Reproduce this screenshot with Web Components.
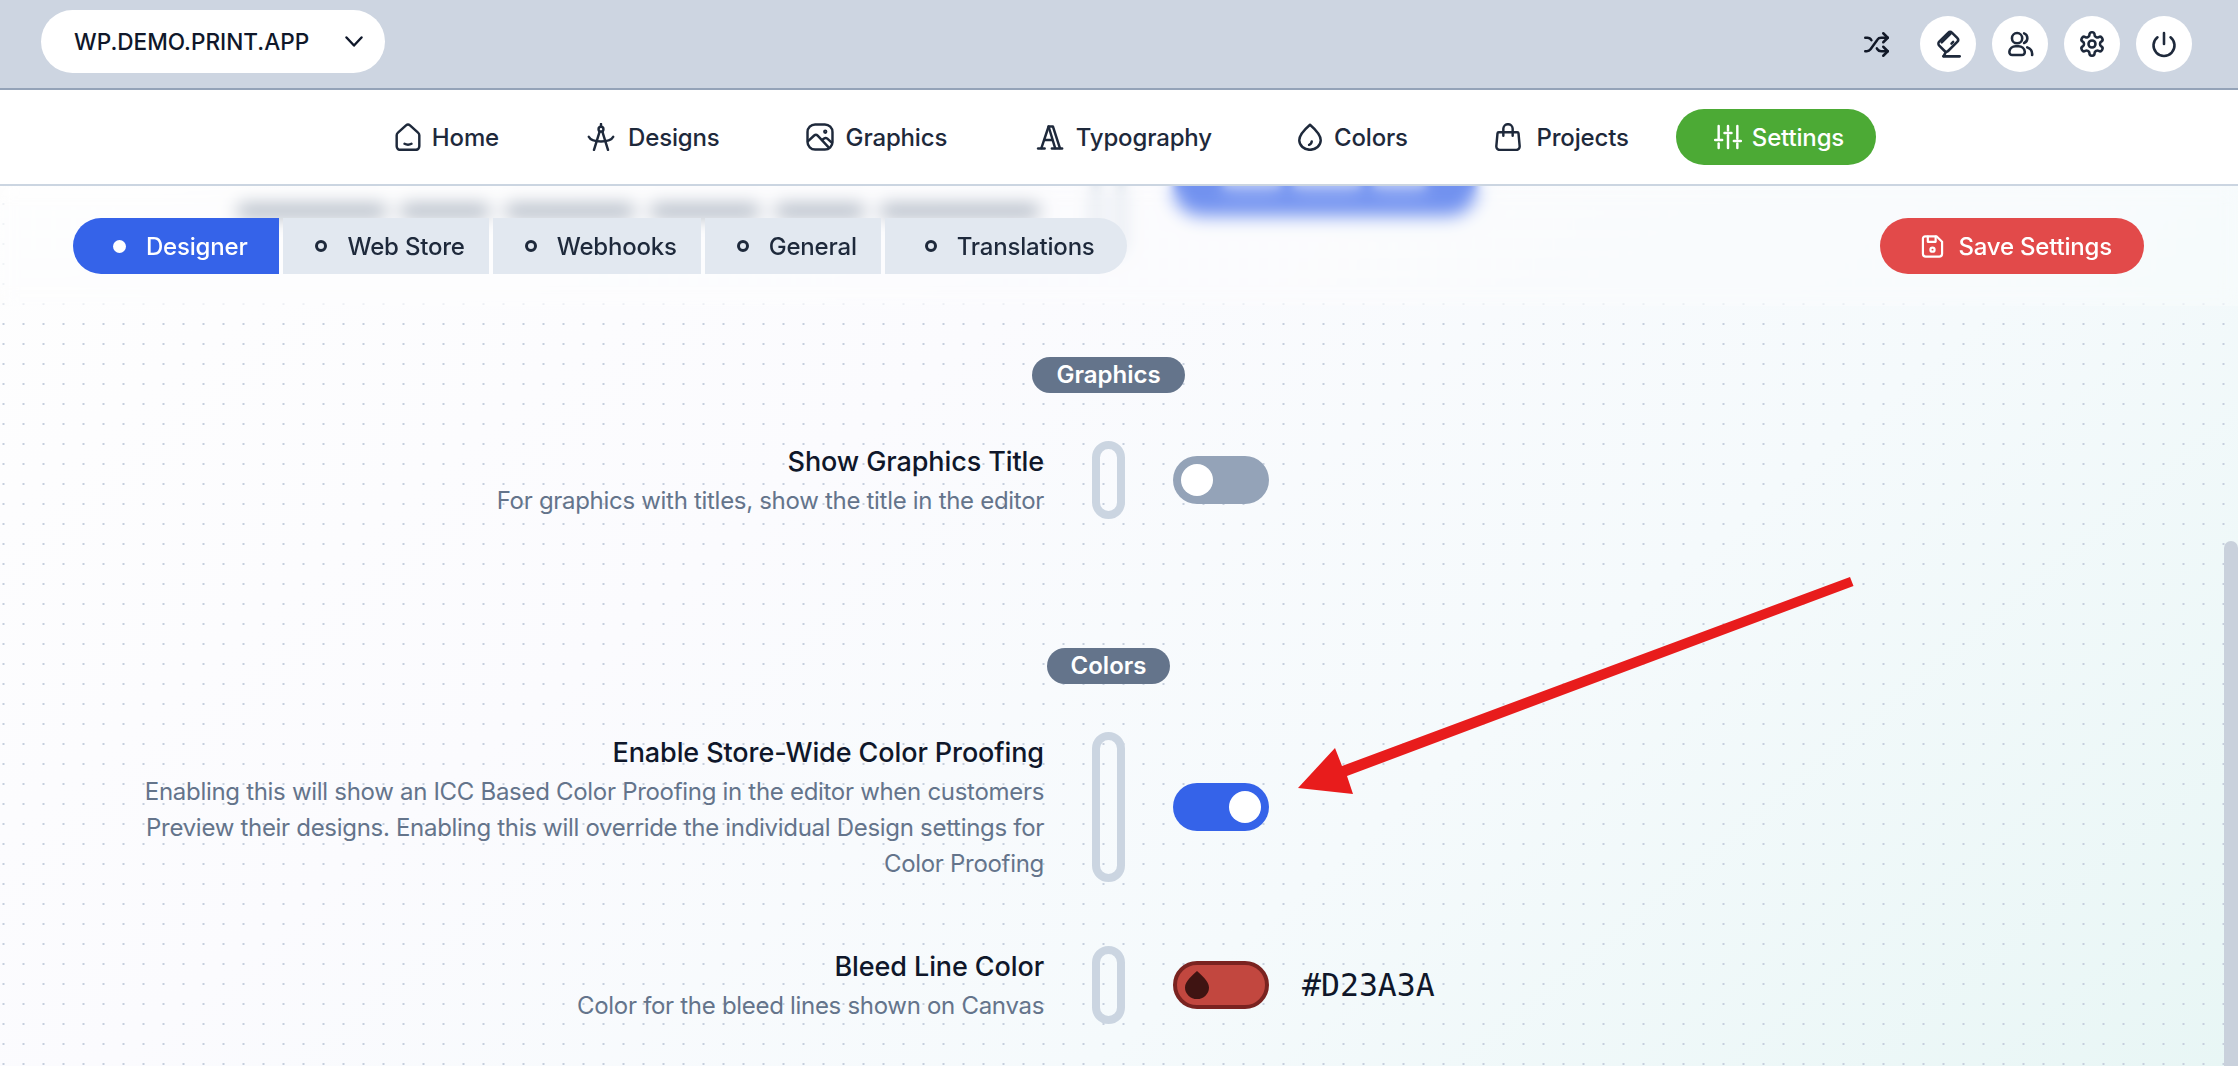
<!DOCTYPE html>
<html lang="en">
<head>
<meta charset="utf-8">
<title>Settings</title>
<style>
  html, body { margin: 0; padding: 0; height: 100%; overflow: hidden; }
  body { font-family: Inter, "Noto Sans", sans-serif; color: #1e293b; }
</style>
</head>
<body>
<settings-page>
  <top-bar slot="top">
    <site-picker>WP.DEMO.PRINT.APP</site-picker>
    <round-btn plain icon="shuffle"></round-btn>
    <round-btn icon="card"></round-btn>
    <round-btn icon="users"></round-btn>
    <round-btn icon="gear"></round-btn>
    <round-btn icon="power"></round-btn>
  </top-bar>
  <main-nav slot="top">
    <nav-link icon="home">Home</nav-link>
    <nav-link icon="compass" style="gap:13px">Designs</nav-link>
    <nav-link icon="image" style="gap:11.500px;margin-left:-1.500px">Graphics</nav-link>
    <nav-link icon="type" style="gap:11.500px;margin-left:1px">Typography</nav-link>
    <nav-link icon="drop" style="margin-left:-4px">Colors</nav-link>
    <nav-link icon="bag" style="gap:14px;margin-left:-1.500px">Projects</nav-link>
    <nav-link icon="sliders" active style="margin-left:-8.500px">Settings</nav-link>
  </main-nav>

  <setting-section label="Graphics">
    <setting-row heading="Show Graphics Title" note="For graphics with titles, show the title in the editor">
      <toggle-switch></toggle-switch>
    </setting-row>
  </setting-section>

  <setting-section label="Colors" class="colors">
    <setting-row heading="Enable Store-Wide Color Proofing" note="Enabling this will show an ICC Based Color Proofing in the editor when customers Preview their designs. Enabling this will override the individual Design settings for Color Proofing">
      <toggle-switch on></toggle-switch>
    </setting-row>
    <setting-row heading="Bleed Line Color" note="Color for the bleed lines shown on Canvas">
      <color-switch value="#D23A3A"></color-switch>
    </setting-row>
  </setting-section>
</settings-page>

<script>
// every icon used on the page, 24x24 stroke paths
const ICONS = {
  shuffle: '<path d="M2 18h1.4c1.3 0 2.5-.6 3.3-1.7l6.1-8.6c.7-1.1 2-1.7 3.3-1.7H22"/><path d="m18 2 4 4-4 4"/><path d="M2 6h1.9c1.5 0 2.9.9 3.6 2.2"/><path d="M22 18h-5.9c-1.3 0-2.6-.7-3.3-1.8l-.5-.8"/><path d="m18 14 4 4-4 4"/>',
  card: '<rect x="4.4" y="4.6" width="15.6" height="11" rx="2.4" transform="rotate(-45 12.2 10.1)"/><path d="m6.6 10.6 7.6-7.6"/><path d="m15 11.6 1.4-1.4"/><path d="M8 22.6h14"/><path d="m8.4 22.2 1.6-3"/>',
  users: '<circle cx="9.5" cy="7" r="4.4"/><path d="M5.5 21.5h8a2.6 2.6 0 0 0 2.6-3 5.4 5.4 0 0 0-5.3-4.5H8.2a5.4 5.4 0 0 0-5.3 4.5 2.6 2.6 0 0 0 2.6 3z"/><path d="M15.5 2.9a4.4 4.4 0 0 1 0 8.2"/><path d="M22.4 21.5c.3-3-1.4-5.6-4.2-6.6"/>',
  gear: '<path d="M12.22 2h-.44a2 2 0 0 0-2 2v.18a2 2 0 0 1-1 1.73l-.43.25a2 2 0 0 1-2 0l-.15-.08a2 2 0 0 0-2.73.73l-.22.38a2 2 0 0 0 .73 2.73l.15.1a2 2 0 0 1 1 1.72v.51a2 2 0 0 1-1 1.74l-.15.09a2 2 0 0 0-.73 2.73l.22.38a2 2 0 0 0 2.73.73l.15-.08a2 2 0 0 1 2 0l.43.25a2 2 0 0 1 1 1.73V20a2 2 0 0 0 2 2h.44a2 2 0 0 0 2-2v-.18a2 2 0 0 1 1-1.73l.43-.25a2 2 0 0 1 2 0l.15.08a2 2 0 0 0 2.73-.73l.22-.39a2 2 0 0 0-.73-2.73l-.15-.08a2 2 0 0 1-1-1.74v-.5a2 2 0 0 1 1-1.74l.15-.09a2 2 0 0 0 .73-2.73l-.22-.38a2 2 0 0 0-2.73-.73l-.15.08a2 2 0 0 1-2 0l-.43-.25a2 2 0 0 1-1-1.73V4a2 2 0 0 0-2-2z"/><circle cx="12" cy="12" r="3"/>',
  power: '<path d="M12 2.5v9.5"/><path d="M6.4 6.2a9 9 0 1 0 11.2 0"/>',
  home: '<path d="M2.3 10.6c0-.9.4-1.7 1.1-2.3L10.300 2a2.600 2.600 0 0 1 3.400 0l6.900 6.300c.7.6 1.100 1.400 1.100 2.300v9.400a3 3 0 0 1-3 3H5.300a3 3 0 0 1-3-3z"/><path d="M9 17.800c1.800 1 4.200 1 6 0"/>',
  compass: '<path d="M12 .8v2.400"/><circle cx="12" cy="5.300" r="2.100"/><path d="M10.900 7.200 6 23"/><path d="M13.100 7.200 18 23"/><path d="M1.500 11.800c2.700 5.400 18.300 5.400 21 0"/>',
  image: '<rect x="1.300" y="1.300" width="21.400" height="21.400" rx="6.500"/><path d="M1.800 15.500 7 10.700c.9-.8 2.100-.8 3 .1l9.800 10.500"/><path d="m14 14.300 1.500-1.100c.9-.6 2-.5 2.800.2l4 3.600"/><circle cx="16.500" cy="7.500" r=".8"/>',
  type: '<path d="M4.600 21.500 10.800 3h3.700l6 18.500"/><path d="M10.800 3 16.400 21.500"/><path d="M7 14.500h6.700"/><path d="M1.800 21.800h5.600"/><path d="M13.600 21.800h8.800"/>',
  drop: '<path d="M12 1.500C7.600 5.300 2.800 10.300 2.800 14.800a9.200 8.200 0 0 0 18.400 0C21.200 10.300 16.400 5.300 12 1.500z"/><path d="M13.500 15.800c-.1 1.400-1 2.500-2.300 2.900"/>',
  bag: '<path d="M4 8h16a1 1 0 0 1 1 .9l1 11a3 3 0 0 1-3 3.200H5a3 3 0 0 1-3-3.200l1-11a1 1 0 0 1 1-.9z"/><path d="M8 11V5a4 4 0 0 1 8 0v6"/>',
  sliders: '<path d="M4 2.500v11"/><path d="M4 17.500v4"/><path d="M1 14.500h6"/><path d="M12 2.500v4"/><path d="M12 10.500v11"/><path d="M9 8.500h6"/><path d="M20 2.500v11"/><path d="M20 17.500v4"/><path d="M17 15.500h6"/>',
  save: '<path d="M5 2.200h10.800l5.400 5.200V19a2.800 2.800 0 0 1-2.800 2.800H5.600A2.800 2.800 0 0 1 2.800 19V4.400A2.200 2.200 0 0 1 5 2.200z"/><path d="M7.500 2.500v5h7.500v-5"/><circle cx="12" cy="15" r="2"/>'
};

function svgIcon(name, size, weight) {
  return `<svg part="icon" width="${size}" height="${size}" viewBox="0 0 24 24" fill="none" stroke="currentColor" stroke-width="${weight}" stroke-linecap="round" stroke-linejoin="round">${ICONS[name]}</svg>`;
}

const pageTemplate = document.createElement('template');
pageTemplate.innerHTML = `
<style>
  :host {
    display: flex;
    flex-direction: column;
    position: relative;
    width: 2238px;
    height: 1066px;
    overflow: hidden;
  }
  main {
    flex: 1;
    position: relative;
    overflow: hidden;
    background-image:
      radial-gradient(circle, #c6cfdd 1.05px, transparent 1.35px),
      linear-gradient(140deg, #fefefe 0%, #fbfbfe 35%, #f5fafc 65%, #e8f6f5 100%);
    background-size: 20px 20px, 100% 100%;
    background-position: -6.500px 8px, 0 0;
  }
  .content {
    position: relative;
    padding: 0 94px 0 73px;
  }
  /* what has scrolled away under the sticky tab strip */
  .ghost { position: absolute; top: 0; left: 0; filter: blur(4px); }
  .ghost i { position: absolute; display: block; }
  .ghost .word { top: 19px; height: 12px; background: #64748b; opacity: .85; border-radius: 6px; }
  .ghost .pill { left: 1092px; top: -60px; width: 17px; height: 114px; border: 8px solid #cbd5e1; border-radius: 20px; }
  .ghost .btn { left: 1173px; top: -30px; width: 304px; height: 60px; background: #3563e9; border-radius: 28px; }
  .ghost .lump { top: -4px; height: 9px; background: #fff; opacity: .7; border-radius: 5px; }
  .thumb {
    position: absolute;
    right: 0;
    top: 355px;
    bottom: 0;
    width: 14px;
    background: #c9d1dc;
    border-radius: 7px 7px 0 0;
  }
  .arrow { position: absolute; top: 0; left: 0; pointer-events: none; }
</style>
<slot name="top"></slot>
<main>
  <div class="ghost">
    <i class="word" style="left:237px;width:150px"></i>
    <i class="word" style="left:400px;width:90px"></i>
    <i class="word" style="left:505px;width:130px"></i>
    <i class="word" style="left:650px;width:110px"></i>
    <i class="word" style="left:775px;width:90px"></i>
    <i class="word" style="left:880px;width:160px"></i>
    <i class="pill"></i>
    <i class="btn"></i>
    <i class="lump" style="left:1222px;width:60px"></i>
    <i class="lump" style="left:1292px;width:70px"></i>
    <i class="lump" style="left:1372px;width:55px"></i>
  </div>
  <tab-strip></tab-strip>
  <div class="content"><slot></slot></div>
  <div class="thumb"></div>
</main>
<svg class="arrow" width="2238" height="1066" viewBox="0 0 2238 1066">
  <polygon fill="#e81c1c" points="1298,788 1335,748 1342,766 1850,577 1853.500,586 1347,776 1353,794"/>
</svg>
`;
class SettingsPage extends HTMLElement {
  connectedCallback() {
    this.attachShadow({ mode: 'open' }).appendChild(pageTemplate.content.cloneNode(true));
  }
}

const topBarTemplate = document.createElement('template');
topBarTemplate.innerHTML = `
<style>
  :host {
    display: flex;
    align-items: center;
    gap: 16px;
    height: 88px;
    padding: 0 46px 0 41px;
    background: #cdd5e1;
    border-bottom: 2px solid #94a3b8;
  }
  ::slotted(site-picker) { margin-right: auto; }
</style>
<slot></slot>
`;
class TopBar extends HTMLElement {
  connectedCallback() {
    this.attachShadow({ mode: 'open' }).appendChild(topBarTemplate.content.cloneNode(true));
  }
}

const pickerTemplate = document.createElement('template');
pickerTemplate.innerHTML = `
<style>
  :host {
    display: flex;
    align-items: center;
    justify-content: space-between;
    box-sizing: border-box;
    width: 344px;
    height: 63px;
    margin-bottom: 5px;
    padding: 0 22px 0 33px;
    background: #fff;
    border-radius: 32px;
    font: 500 22.600px Inter, sans-serif;
    color: #0f172a;
  }
  svg { display: block; }
</style>
<slot></slot>
<svg width="18" height="11" viewBox="0 0 18 11" fill="none" stroke="#0f172a" stroke-width="2.400" stroke-linecap="round" stroke-linejoin="round"><path d="M1.500 1.500 9 9.500l7.500-8"/></svg>
`;
class SitePicker extends HTMLElement {
  connectedCallback() {
    this.attachShadow({ mode: 'open' }).appendChild(pickerTemplate.content.cloneNode(true));
  }
}

class RoundBtn extends HTMLElement {
  connectedCallback() {
    const shadow = this.attachShadow({ mode: 'open' });
    const plain = this.hasAttribute('plain');
    shadow.innerHTML = `
      <style>
        :host {
          display: flex;
          align-items: center;
          justify-content: center;
          width: 56px;
          height: 56px;
          border-radius: 50%;
          background: ${plain ? 'transparent' : '#fff'};
          color: ${plain ? '#111827' : '#1e293b'};
        }
        svg { display: block; }
      </style>
      ${svgIcon(this.getAttribute('icon'), plain ? 27 : 28, 2.200)}
    `;
  }
}

const navTemplate = document.createElement('template');
navTemplate.innerHTML = `
<style>
  :host {
    display: flex;
    align-items: center;
    justify-content: center;
    gap: 24px;
    height: 94px;
    background: #fff;
    border-bottom: 2px solid #cbd5e1;
    position: relative;
    z-index: 2;
  }
</style>
<slot></slot>
`;
class MainNav extends HTMLElement {
  connectedCallback() {
    this.attachShadow({ mode: 'open' }).appendChild(navTemplate.content.cloneNode(true));
  }
}

class NavLink extends HTMLElement {
  connectedCallback() {
    const shadow = this.attachShadow({ mode: 'open' });
    const active = this.hasAttribute('active');
    shadow.innerHTML = `
      <style>
        :host {
          display: flex;
          align-items: center;
          gap: 10px;
          height: 56px;
          padding: 0 32px 0 ${active ? 37.5 : 32}px;
          border-radius: 28px;
          font: 500 24px Inter, sans-serif;
          letter-spacing: -0.15px;
          color: ${active ? '#fff' : '#1e293b'};
          background: ${active ? '#4caa35' : 'transparent'};
        }
        svg { display: block; flex: none; }
      </style>
      ${svgIcon(this.getAttribute('icon'), 28, 2.100)}
      <slot></slot>
    `;
  }
}

const stripTemplate = document.createElement('template');
stripTemplate.innerHTML = `
<style>
  :host {
    display: flex;
    align-items: center;
    justify-content: space-between;
    position: relative;
    z-index: 1;
    height: 120px;
    box-sizing: border-box;
    padding: 32px 94px 32px 73px;
    background: rgba(255, 255, 255, 0.3);
    backdrop-filter: blur(8px);
  }
  .tabs { display: flex; gap: 4px; }
  .save {
    display: flex;
    align-items: center;
    gap: 13px;
    height: 56px;
    padding: 0 32px 0 40px;
    border-radius: 28px;
    background: #e24a4a;
    color: #fff;
    font: 500 24px Inter, sans-serif;
    letter-spacing: -0.2px;
  }
  .save svg { display: block; }
</style>
<div class="tabs">
  <tab-item active>Designer</tab-item>
  <tab-item>Web Store</tab-item>
  <tab-item>Webhooks</tab-item>
  <tab-item>General</tab-item>
  <tab-item last>Translations</tab-item>
</div>
<div class="save">${svgIcon('save', 25, 2.100)}<span>Save Settings</span></div>
`;
class TabStrip extends HTMLElement {
  connectedCallback() {
    this.attachShadow({ mode: 'open' }).appendChild(stripTemplate.content.cloneNode(true));
  }
}

const tabTemplate = document.createElement('template');
tabTemplate.innerHTML = `
<style>
  :host {
    display: flex;
    align-items: center;
    gap: 20px;
    height: 56px;
    padding: 0 24px 0 32px;
    background: #e2e8f0;
    color: #1e293b;
    font: 500 24px Inter, sans-serif;
    letter-spacing: -0.2px;
  }
  :host([active]) {
    background: #3563e9;
    color: #fff;
    padding: 0 32px 0 40px;
    border-radius: 28px 0 0 28px;
  }
  :host([last]) {
    padding: 0 32px 0 40px;
    border-radius: 0 28px 28px 0;
  }
  .ring {
    box-sizing: border-box;
    width: 12px;
    height: 12px;
    border: 3px solid #1e293b;
    border-radius: 50%;
  }
  :host([active]) .ring { border: 0; width: 13px; height: 13px; background: #fff; }
</style>
<span class="ring"></span>
<slot></slot>
`;
class TabItem extends HTMLElement {
  connectedCallback() {
    this.attachShadow({ mode: 'open' }).appendChild(tabTemplate.content.cloneNode(true));
  }
}

class SettingSection extends HTMLElement {
  connectedCallback() {
    const shadow = this.attachShadow({ mode: 'open' });
    const top = this.classList.contains('colors') ? 129 : 51;
    shadow.innerHTML = `
      <style>
        :host {
          display: flex;
          flex-direction: column;
          align-items: center;
          gap: 64px;
          margin-top: ${top}px;
        }
        .label {
          height: 36px;
          margin-bottom: -16px;
          padding: 0 24px;
          border-radius: 18px;
          background: #64748b;
          color: #fff;
          font: 600 24px/36px Inter, sans-serif;
        }
      </style>
      <div class="label">${this.getAttribute('label')}</div>
      <slot></slot>
    `;
  }
}

class SettingRow extends HTMLElement {
  connectedCallback() {
    const shadow = this.attachShadow({ mode: 'open' });
    shadow.innerHTML = `
      <style>
        :host {
          display: grid;
          grid-template-columns: 1fr 33px 1fr;
          column-gap: 48px;
          width: 100%;
          align-items: center;
        }
        .text {
          display: flex;
          flex-direction: column;
          align-items: flex-end;
          gap: 4px;
          padding-top: 2px;
          text-align: right;
        }
        .heading { padding-top: 1px; margin-bottom: -1px; font: 500 27px/36px Inter, sans-serif; letter-spacing: -0.1px; color: #0f172a; }
        .note { max-width: 900px; font: 400 24px/36px Inter, sans-serif; letter-spacing: -0.3px; color: #64748b; }
        .bar {
          align-self: stretch;
          box-sizing: border-box;
          border: 8px solid #cbd5e1;
          border-radius: 17px;
        }
      </style>
      <div class="text">
        <div class="heading">${this.getAttribute('heading')}</div>
        <div class="note">${this.getAttribute('note')}</div>
      </div>
      <div class="bar"></div>
      <div><slot></slot></div>
    `;
  }
}

const switchTemplate = document.createElement('template');
switchTemplate.innerHTML = `
<style>
  :host {
    display: flex;
    align-items: center;
    box-sizing: border-box;
    width: 96px;
    height: 48px;
    padding: 0 8px;
    border-radius: 24px;
    background: #94a3b8;
  }
  :host([on]) { background: #3563e9; justify-content: flex-end; }
  .knob { width: 32px; height: 32px; border-radius: 50%; background: #fff; }
</style>
<div class="knob"></div>
`;
class ToggleSwitch extends HTMLElement {
  connectedCallback() {
    this.attachShadow({ mode: 'open' }).appendChild(switchTemplate.content.cloneNode(true));
  }
}

class ColorSwitch extends HTMLElement {
  connectedCallback() {
    const shadow = this.attachShadow({ mode: 'open' });
    shadow.innerHTML = `
      <style>
        :host { display: flex; align-items: center; gap: 33px; }
        .swatch {
          display: flex;
          align-items: center;
          box-sizing: border-box;
          width: 96px;
          height: 48px;
          padding: 0 8px;
          border: 4px solid #7a2320;
          border-radius: 24px;
          background: #c2473f;
        }
        svg { display: block; }
        .hex {
          font: 400 31.500px "DejaVu Sans Mono", monospace;
          color: #0f172a;
        }
      </style>
      <div class="swatch">
        <svg width="24" height="28" viewBox="0 0 24 28"><path fill="#3f1412" d="M12 0C8 4 0 10 0 16.500a12 11.500 0 0 0 24 0C24 10 16 4 12 0z"/></svg>
      </div>
      <span class="hex">${this.getAttribute('value')}</span>
    `;
  }
}

customElements.define('settings-page', SettingsPage);
customElements.define('top-bar', TopBar);
customElements.define('site-picker', SitePicker);
customElements.define('round-btn', RoundBtn);
customElements.define('main-nav', MainNav);
customElements.define('nav-link', NavLink);
customElements.define('tab-strip', TabStrip);
customElements.define('tab-item', TabItem);
customElements.define('setting-section', SettingSection);
customElements.define('setting-row', SettingRow);
customElements.define('toggle-switch', ToggleSwitch);
customElements.define('color-switch', ColorSwitch);
</script>
</body>
</html>
